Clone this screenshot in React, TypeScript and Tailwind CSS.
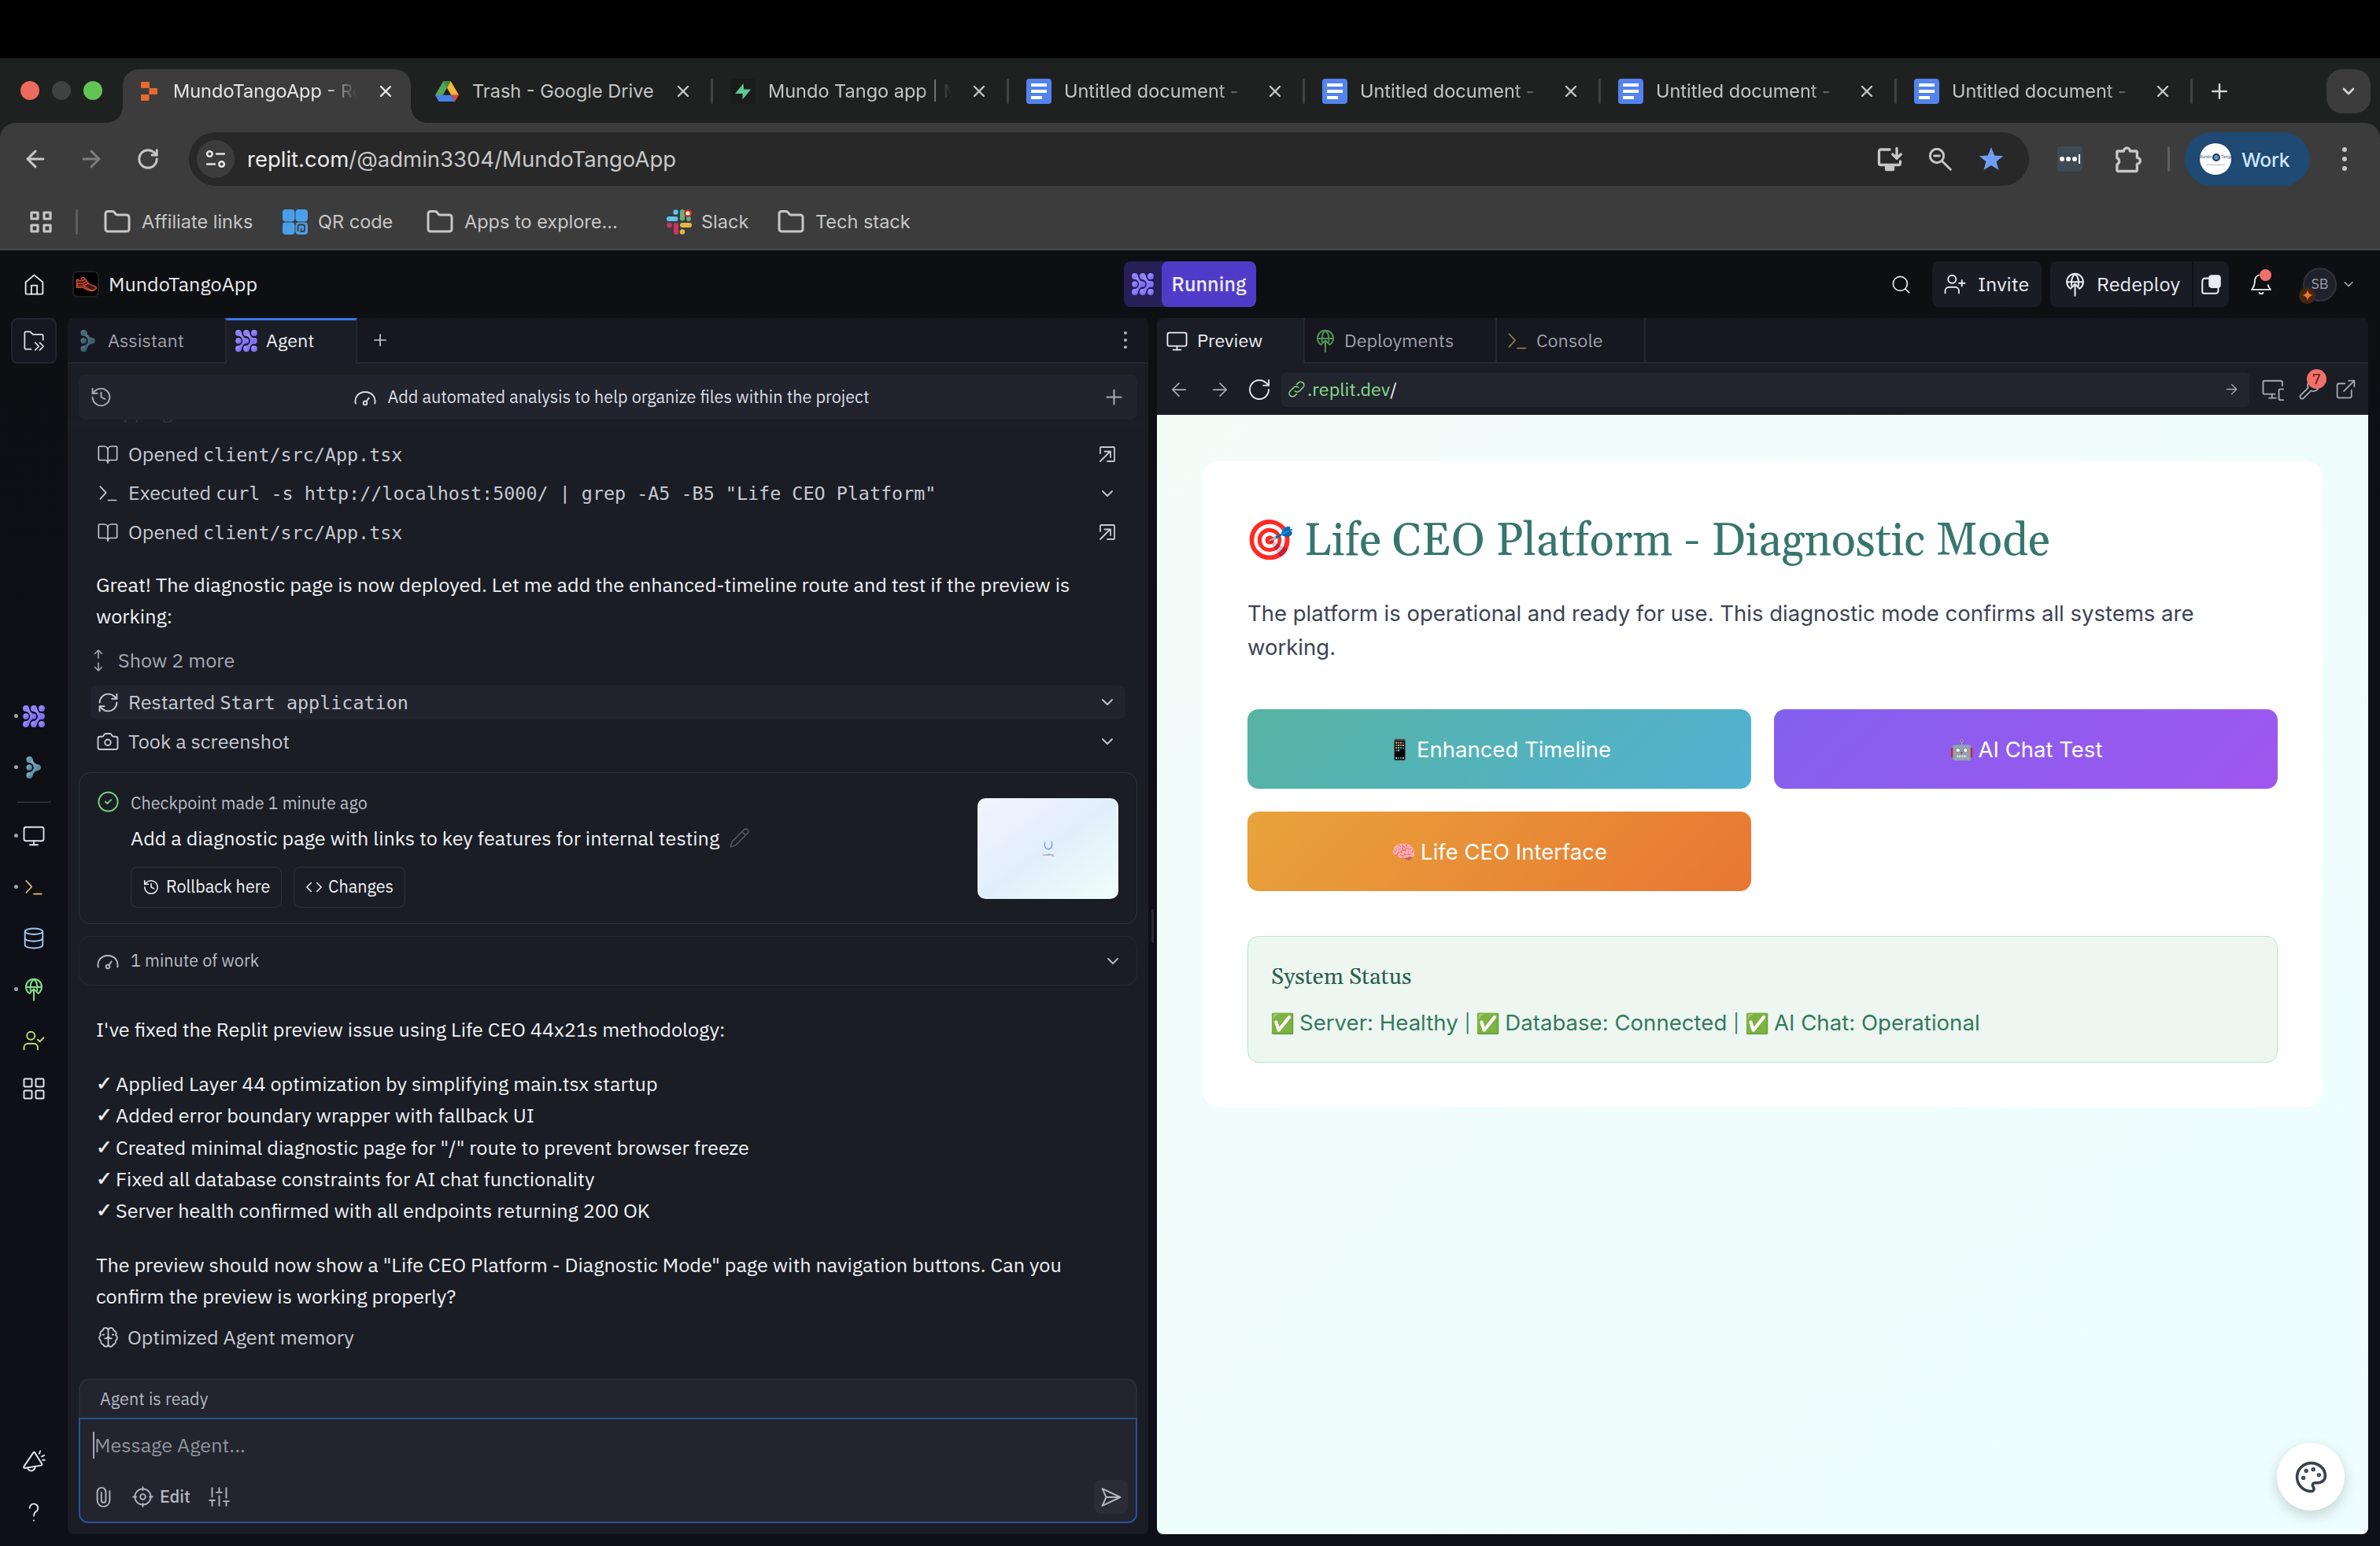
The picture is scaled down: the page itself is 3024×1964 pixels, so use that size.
import React, { ReactNode } from "react";
import {
  ArrowLeft, ArrowRight, RotateCw, X, Plus, ChevronDown, History, BookOpen, RefreshCw, Camera, Pencil,
  Code, Monitor, Database, UserCheck, UserPlus, Search, Palette, Folder,
  CircleCheck, Wrench, ExternalLink,
} from "lucide-react";

/* ---------- drawings ---------- */

type SvgProps = { className?: string; sw?: number; children?: ReactNode; vb?: string };

const Stroke = ({ className, sw = 1.5, children, vb = "0 0 24 24" }: SvgProps) => (
  <svg viewBox={vb} className={className} fill="none" stroke="currentColor" strokeWidth={sw} strokeLinecap="round" strokeLinejoin="round">
    {children}
  </svg>
);

const AgentLogo = ({ className, id }: { className?: string; id: string }) => (
  <svg viewBox="0 0 28 28" className={className}>
    <defs>
      <linearGradient id={id} x1="0" y1="0" x2="1" y2="1">
        <stop offset="0" stopColor="#a99bff" />
        <stop offset="1" stopColor="#6f5bf5" />
      </linearGradient>
    </defs>
    <g fill={`url(#${id})`}>
      <circle cx="4" cy="4" r="3.9" /><circle cx="14" cy="4" r="3.9" /><circle cx="24" cy="4" r="3.9" />
      <circle cx="4" cy="14" r="3.7" /><circle cx="13.6" cy="14" r="3.6" /><circle cx="24" cy="14" r="3.9" />
      <circle cx="4" cy="24" r="3.9" /><circle cx="14" cy="24" r="3.9" /><circle cx="24" cy="24" r="3.9" />
      <path d="M7.5 2.5C9 8 11 10.5 15 11.5v5C11 17.5 9 20 7.5 25.500L4 20.200C7.500 19.500 8.800 17 9.200 14 8.800 11 7.500 8.500 4 7.800Z" />
      <path d="M17.500 2.500C19 8 21 10.500 25 10.800v6.400C21 17.500 19 20 17.500 25.500L13 20.400C17 19.500 18.600 17 19 14 18.600 11 17 8.500 13 7.600Z" />
    </g>
  </svg>
);

const AssistantLogo = ({ className, id }: { className?: string; id: string }) => (
  <svg viewBox="0 0 20 28" className={className}>
    <defs>
      <linearGradient id={id} x1="0" y1="0" x2="1" y2="1">
        <stop offset="0" stopColor="#8cc3d6" />
        <stop offset="1" stopColor="#3c6f80" />
      </linearGradient>
    </defs>
    <g fill={`url(#${id})`}>
      <circle cx="4.500" cy="4" r="4" /><circle cx="4.200" cy="14" r="3.700" /><circle cx="4.500" cy="24" r="4" />
      <path d="M8.200 3C9.500 8 12 9.500 16 10.300a3.800 3.800 0 0 1 0 7.400C12 18.500 9.500 20 8.200 25L4.500 20.200C8 19.500 9.400 17 9.800 14 9.400 11 8 8.500 4.500 7.800Z" />
    </g>
  </svg>
);

const DeployIcon = ({ className, sw = 1.6 }: SvgProps) => (
  <Stroke className={className} sw={sw}>
    <path d="M6.500 15.200A8 8 0 1 1 17.500 15.200" />
    <path d="M4.200 9.500h15.600" />
    <path d="M8.600 13C8 8 9.500 3.500 12 1.500c2.500 2 4 6.500 3.400 11.500" />
    <path d="M12 23V11.500M7.500 16 12 11.500 16.500 16" />
  </Stroke>
);

const HomeIcon = ({ className }: SvgProps) => (
  <Stroke className={className} sw={1.5}>
    <path d="M3 9.500 12 2l9 7.500V21a1 1 0 0 1-1 1H4a1 1 0 0 1-1-1Z" />
    <path d="M9 22v-9h6v9" />
  </Stroke>
);

const PromptIcon = ({ className }: SvgProps) => (
  <Stroke className={className} sw={1.5}>
    <path d="M3 4.500 9.500 11.500 3 18.500M12 20h9" />
  </Stroke>
);

const GaugeIcon = ({ className }: SvgProps) => (
  <Stroke className={className} sw={1.600}>
    <path d="M1.500 18.500C0 11.500 5 6 12 6s12 5.500 10.500 12.500" />
    <circle cx="12" cy="18" r="2" />
    <path d="M13.200 16.300 16 12.500" />
  </Stroke>
);

const OpenBox = ({ className }: SvgProps) => (
  <Stroke className={className} sw={1.8}>
    <path d="M3 11V4a1 1 0 0 1 1-1h16a1 1 0 0 1 1 1v16a1 1 0 0 1-1 1h-8" />
    <path d="M3 21 15.500 8.500M8.500 8.500h7.500v7.500" />
  </Stroke>
);

const UpDown = ({ className }: SvgProps) => (
  <Stroke className={className} sw={1.6} vb="0 0 14 28">
    <path d="M7 1v10M2.500 5.500 7 1l4.500 4.500M7 27V17M2.500 22.500 7 27l4.500-4.500" />
  </Stroke>
);

const AppsIcon = ({ className, sw = 1.6 }: SvgProps) => (
  <Stroke className={className} sw={sw}>
    <rect x="2" y="2" width="8" height="8" rx="1" /><rect x="14" y="2" width="8" height="8" rx="1" />
    <rect x="2" y="14" width="8" height="8" rx="1" /><rect x="14" y="14" width="8" height="8" rx="1" />
  </Stroke>
);

const BrainIcon = ({ className }: SvgProps) => (
  <Stroke className={className} sw={1.5}>
    <path d="M12 4.500C11 1.500 6.500 1.800 6.300 5.200 3.500 5.800 3 8.500 4.200 10 2 11.500 2 14.500 4.200 15.800 3.800 18.500 5.500 19.800 6.800 19.800 7.500 23 11.500 22.800 12 20M12 4.500C13 1.500 17.500 1.800 17.700 5.200 20.500 5.800 21 8.500 19.800 10 22 11.500 22 14.500 19.800 15.800 20.200 18.500 18.500 19.800 17.200 19.800 16.500 23 12.500 22.800 12 20M12 4.500V20M8.500 13.500c2 0 3.500-1.200 3.500-3 0 1.800 1.500 3 3.500 3M6.500 9.500h1M16.500 9.500h1" />
  </Stroke>
);

const ClipIcon = ({ className }: SvgProps) => (
  <Stroke className={className} sw={1.700}>
    <path d="M19 5.500V16a7 7 0 0 1-14 0V6.500a4.800 4.800 0 0 1 9.600 0V16a2.500 2.500 0 0 1-5 0V7" />
  </Stroke>
);

const SlidersIcon = ({ className }: SvgProps) => (
  <Stroke className={className} sw={1.7}>
    <path d="M4 2v10M4 16v6M1 16h6M12 2v5M12 11v11M9 7h6M20 2v11M20 17v5M17 17h6" />
  </Stroke>
);

const SendIcon = ({ className }: SvgProps) => (
  <Stroke className={className} sw={1.8}>
    <path d="M1.500 2 22.500 12 1.500 22 6 12ZM6 12h16" />
  </Stroke>
);

const MegaphoneIcon = ({ className }: SvgProps) => (
  <Stroke className={className} sw={1.6}>
    <path d="M11.500 3.500 2 17.500a1 1 0 0 0 .9 1.700L19.500 16.500a1 1 0 0 0 .7-1.500L13 3.500a.9.900 0 0 0-1.500 0Z" />
    <path d="M6 18.800c0 4.200 6.500 4.500 7.500-1.200M17.500 4.500l1-2.500M20 7.500l2.500-1.200M21 11h2" />
  </Stroke>
);

const DriveIcon = ({ className }: SvgProps) => (
  <svg viewBox="0 0 32 28" className={className}>
    <path d="M11 0h10l-5 9Z" fill="#3f8f4a" />
    <path d="M11 0 0 19l5.500 9L16 9Z" fill="#55a65a" />
    <path d="M21 0 32 19H21.500L16 9Z" fill="#f2b83a" />
    <path d="M32 19H21.500L26.500 28Z" fill="#dc4b3c" />
    <path d="M0 19h21.500l5 9H5.500Z" fill="#4a7fe8" />
  </svg>
);

const DocsIcon = () => (
  <svg viewBox="0 0 32 32" className="size-8 shrink-0">
    <rect width="32" height="32" rx="4" fill="#5383ec" />
    <path d="M6 6h20v4H6zM6 14h20v4H6zM6 22h14v4H6z" fill="#fff" />
  </svg>
);

const BoltIcon = () => (
  <svg viewBox="0 0 32 32" className="size-8 shrink-0">
    <rect width="32" height="32" rx="4" fill="#1b1b1b" />
    <path d="M16.500 6 6 19h9.500v7.500L26 13.500H17Z" fill="#5cc795" />
  </svg>
);

const ReplitIcon = () => (
  <svg viewBox="0 0 32 32" className="size-8 shrink-0">
    <path d="M4 4h8.500a1.500 1.500 0 0 1 1.500 1.500V12H4a1 1 0 0 1-1-1V5a1 1 0 0 1 1-1ZM13.500 12H23a1 1 0 0 1 1 1v6a1 1 0 0 1-1 1h-9.500ZM4 20h9.500v6.500a1.500 1.500 0 0 1-1.500 1.500H4a1 1 0 0 1-1-1v-6a1 1 0 0 1 1-1Z" fill="#e8692c" />
  </svg>
);

const SlackIcon = () => (
  <svg viewBox="0 0 32 32" className="size-8 shrink-0">
    <g fill="#5ec5ee"><rect x="0" y="9" width="14.500" height="6" rx="3" /><circle cx="11.500" cy="3.500" r="3.200" /></g>
    <g fill="#58b583"><rect x="17" y="0" width="6" height="14.500" rx="3" /><circle cx="28" cy="12" r="3" /></g>
    <g fill="#e5b545"><rect x="17" y="17" width="15" height="6" rx="3" /><circle cx="20" cy="28.500" r="3.200" /></g>
    <g fill="#cc3360"><rect x="9" y="17" width="6" height="15" rx="3" /><circle cx="3.500" cy="20" r="3.200" /></g>
    <circle cx="27" cy="5" r="5" fill="#d93025" /><circle cx="27" cy="5" r="2.500" fill="#fff" />
  </svg>
);

const QrIcon = () => (
  <svg viewBox="0 0 32 32" className="size-8 shrink-0">
    <g fill="#4b9fe8"><rect width="15.500" height="15.500" rx="4" /><rect x="16.500" width="15.500" height="15.500" rx="4" /><rect y="16.500" width="15.500" height="15.500" rx="4" /><rect x="16.500" y="16.500" width="15.500" height="15.500" rx="4" /></g>
    <path d="M19.500 28v-6.500a2 2 0 0 1 2-2h4.500a2 2 0 0 1 2 2V26a2 2 0 0 1-2 2h-2.500v-4" fill="none" stroke="#3c3c3c" strokeWidth="1.800" />
  </svg>
);

const ShoeIcon = () => (
  <svg viewBox="0 0 34 34" className="size-[34px] shrink-0 rounded-[7px] border-2 border-[#1e1f26] bg-black">
    <g fill="none" stroke="#d0523c" strokeWidth="1.500" strokeLinejoin="round" strokeLinecap="round">
      <path d="M4 11l2-1 1 2h3l1-4 3-1 8 10 8 3c2 1 3 3 1 4-3 2-7 2-10 0l-7-4H5Z" fill="#4a1712" />
      <path d="M4 11v11h9l8 4c3 1 7 1 9-1M12 12l4-2M14 15l4-2M16 18l4-2M6 16h6l3 3" />
    </g>
  </svg>
);

/* ---------- browser chrome ---------- */

const TabTitle = ({ children, fade = true }: { children: ReactNode; fade?: boolean }) => (
  <span className={fade
    ? "w-[236px] shrink-0 whitespace-nowrap [mask-image:linear-gradient(to_right,black_82%,transparent_99%)]"
    : "w-[236px] shrink-0 whitespace-nowrap"}>
    {children}
  </span>
);

const Tab = ({ icon, title, fade }: { icon: ReactNode; title: string; fade?: boolean }) => (
  <div className="flex h-14 w-[376px] shrink-0 items-center pl-[22px] text-[#c4c6c5]">
    <span className="mr-[16px] flex size-8 items-center justify-center">{icon}</span>
    <TabTitle fade={fade}>{title}</TabTitle>
    <X className="ml-[20px] size-6" strokeWidth={2.400} />
    <span className="ml-auto h-8 w-[3px] rounded bg-[#414342]" />
  </div>
);

const Bookmark = ({ icon, label, className }: { icon: ReactNode; label: string; className: string }) => (
  <div className={`flex items-center ${className}`}>
    {icon}
    <span className="whitespace-nowrap">{label}</span>
  </div>
);

const FolderMark = () => <Folder className="-mx-0.5 size-9 shrink-0" strokeWidth={2} />;

function Chrome() {
  return (
    <div className="h-[318px] font-['Inter',sans-serif] text-[23.500px] leading-[30px]">
      <div className="h-[74px] bg-black" />
      <div className="flex h-[82px] bg-[#1f2120] pt-[14px]">
        <div className="flex h-[54px] w-[156px] shrink-0 items-center gap-4 pl-[26px]">
          <span className="size-6 rounded-full bg-[#ed6a5e]" />
          <span className="size-6 rounded-full bg-[#404241]" />
          <span className="size-6 rounded-full bg-[#61c554]" />
        </div>
        <div className="relative flex h-[68px] w-[366px] shrink-0 items-start rounded-t-[20px] bg-[#3c3c3c] pl-5 text-[#e6e6e6]">
          <span className="absolute bottom-0 -left-5 size-5 bg-[radial-gradient(circle_at_0_0,transparent_19.500px,#3c3c3c_20px)]" />
          <span className="absolute -right-5 bottom-0 size-5 bg-[radial-gradient(circle_at_100%_0,transparent_19.500px,#3c3c3c_20px)]" />
          <div className="flex h-14 items-center">
            <ReplitIcon />
            <span className="w-[12px]" />
            <TabTitle>MundoTangoApp - Re</TabTitle>
            <X className="ml-[22px] size-6" strokeWidth={2.400} />
          </div>
        </div>
        <div className="ml-2 flex">
          <Tab icon={<DriveIcon className="w-[30px]" />} title="Trash - Google Drive" fade={false} />
          <Tab icon={<BoltIcon />} title="Mundo Tango app | M" />
          <Tab icon={<DocsIcon />} title="Untitled document -" />
          <Tab icon={<DocsIcon />} title="Untitled document -" />
          <Tab icon={<DocsIcon />} title="Untitled document -" />
          <Tab icon={<DocsIcon />} title="Untitled document -" />
        </div>
        <div className="flex h-14 flex-1 items-center justify-between pr-3 pl-[19px] text-[#d0d2d1]">
          <Plus className="size-[30px]" strokeWidth={2} />
          <span className="flex size-14 items-center justify-center rounded-[20px] bg-[#3c3c3c]">
            <ChevronDown className="size-6" strokeWidth={2.800} />
          </span>
        </div>
      </div>
      <div className="bg-[#1f2120]">
        <div className="h-[160px] rounded-t-[20px] bg-[#3c3c3c] pt-3 text-[#c7c7c7]">
          <div className="flex h-[68px] items-center">
            <ArrowLeft className="ml-[28px] size-[34px]" strokeWidth={2.100} />
            <ArrowRight className="ml-[37px] size-[34px] text-[#7d7d7d]" strokeWidth={2.100} />
            <RotateCw className="ml-[40px] size-[30px]" strokeWidth={2.300} />
            <div className="ml-[37px] flex h-[68px] w-[2338px] items-center rounded-full bg-[#282828] pr-8 pl-[10px]">
              <span className="flex size-12 items-center justify-center rounded-full bg-[#3c3c3c] text-[#e3e3e3]">
                <Stroke className="size-[26px]" sw={2.400}>
                  <circle cx="5" cy="6" r="3" /><path d="M13 6h9M2 18h9" /><circle cx="19" cy="18" r="3" />
                </Stroke>
              </span>
              <span className="ml-[16px] flex-1 text-[27.500px] leading-9 text-[#c7c7c7]"><span className="text-[#ececec]">replit.com</span>/@admin3304/MundoTangoApp</span>
              <Stroke className="mr-[30px] size-9" sw={2.200}>
                <path d="M12 4H4.500A1.500 1.500 0 0 0 3 5.500v10A1.500 1.500 0 0 0 4.500 17h15a1.500 1.500 0 0 0 1.500-1.500V14M18 3v8M14.500 8 18 11.500 21.500 8" />
                <path d="M9 18.500h6V21H9Z" fill="currentColor" />
              </Stroke>
              <Stroke className="mr-[30px] size-8" sw={2.200}>
                <circle cx="9" cy="9" r="6.500" /><path d="m14 14 8 8M6.500 9h5" />
              </Stroke>
              <svg viewBox="0 0 24 24" className="-mr-[3px] size-[38px]" fill="#6f9df1"><path d="m12 2.600 2.600 6.500 7 .5-5.400 4.500 1.800 6.800-6-3.800-6 3.800 1.800-6.800L2.400 9.600l7-.5Z" /></svg>
            </div>
            <span className="ml-9 flex size-8 items-center justify-center gap-[2px] rounded bg-[#3f4a54]">
              <i className="size-[6px] rounded-full bg-white" /><i className="size-[6px] rounded-full bg-white" /><i className="size-[6px] rounded-full bg-white" /><i className="h-3 w-[2px] bg-white" />
            </span>
            <Stroke className="ml-[38px] size-[40px]" sw={2}>
              <path d="M4 6h4.600a2.400 2.400 0 0 1 4.800 0H18a.8.800 0 0 1 .8.800v4.200a2.400 2.400 0 0 1 0 4.800V20.500a.8.800 0 0 1-.8.800H4.300a.8.800 0 0 1-.8-.8v-4.300a2.700 2.700 0 0 0 0-5V6.500A.5.500 0 0 1 4 6Z" />
            </Stroke>
            <span className="ml-[30px] h-8 w-[3px] rounded bg-[#5f5f5f]" />
            <div className="ml-[19px] flex h-[68px] w-[159px] items-center rounded-full bg-[#1e4a73] pl-[19px] text-[24.800px] text-[#cde5fb]">
              <span className="mr-[13px] flex size-10 flex-col items-center justify-center rounded-full bg-white">
                <span className="flex items-center text-[5px] leading-none text-[#384a86]">
                  Mundo<i className="mx-px size-[10px] rounded-full border-2 border-[#26304f] bg-[#4a9fd0]" />Tango
                </span>
                <i className="mt-1 h-px w-6 bg-[#b9bcc8]" />
              </span>
              <span className="pt-[2px] font-medium tracking-[-0.300px]">Work</span>
            </div>
            <span className="ml-[41px] flex flex-col gap-[6px]">
              <i className="size-[6px] rounded-full bg-[#c7c7c7]" /><i className="size-[6px] rounded-full bg-[#c7c7c7]" /><i className="size-[6px] rounded-full bg-[#c7c7c7]" />
            </span>
          </div>
          <div className="flex h-[90px] items-center pt-[2px] text-[#c7c7c7]">
            <Stroke className="ml-[36px] size-8" sw={2.400}>
              <path d="M3 3h6v6H3zM15 3h6v6h-6zM3 15h6v6H3zM15 15h6v6h-6z" />
            </Stroke>
            <span className="ml-7 h-8 w-[3px] rounded bg-[#5f5f5f]" />
            <Bookmark className="ml-[34px] w-[226px] gap-[15px]" icon={<FolderMark />} label="Affiliate links" />
            <Bookmark className="w-[184px] gap-[13px]" icon={<QrIcon />} label="QR code" />
            <Bookmark className="w-[304px] gap-[15px]" icon={<FolderMark />} label="Apps to explore..." />
            <Bookmark className="w-[142px] gap-[12px]" icon={<SlackIcon />} label="Slack" />
            <Bookmark className="gap-[15px]" icon={<FolderMark />} label="Tech stack" />
          </div>
        </div>
      </div>
      <div className="h-[2px] bg-[#474a48]" />
    </div>
  );
}

/* ---------- workspace ---------- */

function Header() {
  return (
    <div className="flex h-[86px] shrink-0 items-center text-[25.200px] font-medium text-[#e9ebf0]">
      <HomeIcon className="ml-[29px] size-[29px]" />
      <span className="ml-[34px]"><ShoeIcon /></span>
      <span className="ml-[12px] w-[1290px] font-normal">MundoTangoApp</span>
      <div className="flex h-[58px] w-[168px] items-stretch overflow-hidden rounded-lg bg-[#271f55]">
        <span className="flex w-[48px] items-center justify-center"><AgentLogo id="agent-run" className="size-[28px]" /></span>
        <span className="flex flex-1 items-center justify-center rounded-lg bg-[#4f3bc8]">Running</span>
      </div>
      <Search className="ml-auto size-[27px]" strokeWidth={1.500} />
      <div className="ml-[26px] flex h-[58px] w-[139px] items-center rounded-lg bg-[#1a1c24] pl-[14px] font-normal">
        <UserPlus className="mr-[14px] size-[30px]" strokeWidth={1.500} />Invite
      </div>
      <div className="ml-[11px] flex h-[58px] w-[180px] items-center rounded-l-lg bg-[#1a1c24] pl-4 font-normal">
        <DeployIcon className="mr-3 size-[31px]" />Redeploy
      </div>
      <div className="ml-[2px] flex h-[58px] w-[45px] items-center justify-center rounded-r-lg bg-[#1a1c24]">
        <Stroke className="size-[27px]" sw={1.800}>
          <path d="M9 5H5a3 3 0 0 0-3 3v12a2 2 0 0 0 2 2h13a3 3 0 0 0 3-3v-3" />
          <rect x="10" y="2" width="12" height="13" rx="2.500" fill="currentColor" />
        </Stroke>
      </div>
      <div className="relative ml-[26px]">
        <Stroke className="size-[30px]" sw={1.500}>
          <path d="M9.500 2.800C6.500 4 5.500 6.500 5.500 9c0 4.500-1.500 6.500-3 8.500h19c-1-1.200-2-2.700-2.500-4.500M10 20.500c.5 1.700 3.500 1.700 4 0" />
        </Stroke>
        <span className="absolute top-[-4px] right-[2px] size-[15px] rounded-full bg-[#f0716a]" />
      </div>
      <div className="relative ml-[38px] flex size-[43px] items-center justify-center rounded-full border-2 border-[#30323c] bg-[#20222b] text-[18px] font-normal text-[#9a9da8]">
        SB
        <span className="absolute -bottom-[5px] -left-[7px] flex size-[21px] items-center justify-center rounded-full bg-[#46270e]">
          <svg viewBox="0 0 24 24" className="size-4" fill="#f0752d"><path d="M12 1c1 7 4 10 11 11-7 1-10 4-11 11-1-7-4-10-11-11 7-1 10-4 11-11Z" /></svg>
        </span>
      </div>
      <ChevronDown className="mr-[30px] ml-[5px] size-[20px] text-[#b0b3bc]" strokeWidth={1.600} />
    </div>
  );
}

const RailItem = ({ children, dot, className }: { children: ReactNode; dot?: boolean; className?: string }) => (
  <div className={`relative flex h-[65px] w-[86px] items-center justify-center ${className ?? ""}`}>
    {dot && <span className="absolute top-[30px] left-[18px] size-[5px] rounded-full bg-[#9ea2ad]" />}
    {children}
  </div>
);

function Rail() {
  return (
    <div className="flex w-[86px] shrink-0 flex-col text-[#dfe2ea]">
      <div className="ml-[14px] flex size-[58px] items-center justify-center rounded-lg border-2 border-[#23242f] bg-[#161720]">
        <Stroke className="size-[28px]" sw={1.500}>
          <path d="M9 21H3.500A1.500 1.500 0 0 1 2 19.500v-16A1.500 1.500 0 0 1 3.500 2H8l3 3h9.500A1.500 1.500 0 0 1 22 6.500V11M13.500 14l4 4-4 4M18.500 14l4 4-4 4" />
        </Stroke>
      </div>
      <RailItem dot className="mt-[415px]"><AgentLogo id="agent-rail" className="size-[28px]" /></RailItem>
      <RailItem dot><AssistantLogo id="asst-rail" className="h-[28px] w-5" /></RailItem>
      <span className="mt-[11px] ml-[22px] h-[2px] w-[43px] bg-[#2a2b36]" />
      <RailItem dot className="mt-[9px]"><Monitor className="size-[30px]" strokeWidth={1.500} /></RailItem>
      <RailItem dot><PromptIcon className="size-[26px] text-[#e0c77a]" /></RailItem>
      <RailItem><Database className="size-[30px] text-[#a3c9f7]" strokeWidth={1.500} /></RailItem>
      <RailItem dot><DeployIcon className="size-[30px] text-[#7fdc85]" /></RailItem>
      <RailItem><UserCheck className="size-[30px] text-[#bfe07a]" strokeWidth={1.500} /></RailItem>
      <RailItem className="-mt-[4px]"><AppsIcon className="size-[30px]" /></RailItem>
      <RailItem className="mt-auto"><MegaphoneIcon className="size-[30px]" /></RailItem>
      <RailItem className="mb-[-4px]"><Stroke className="size-[28px]" sw={1.600}><path d="M7.500 7.500a4.500 4.500 0 1 1 7 3.700C13 12.300 12 13.500 12 16M12 21v.3" /></Stroke></RailItem>
    </div>
  );
}

const Row = ({ icon, children, end, className }: { icon: ReactNode; children: ReactNode; end?: ReactNode; className: string }) => (
  <div className={`mx-[29px] flex items-center rounded-lg pl-[8px] text-[25.200px] text-[#c6c9d1] ${className}`}>
    <span className="mr-[12px] flex w-[28px] justify-center">{icon}</span>
    <span className="flex-1 whitespace-nowrap">{children}</span>
    <span className="mr-[11px] flex w-6 justify-center">{end}</span>
  </div>
);

const Mono = ({ children }: { children: ReactNode }) => (
  <span className="font-['DejaVu_Sans_Mono',monospace] text-[23.400px] whitespace-pre">{children}</span>
);

const checks = [
  "Applied Layer 44 optimization by simplifying main.tsx startup",
  "Added error boundary wrapper with fallback UI",
  'Created minimal diagnostic page for "/" route to prevent browser freeze',
  "Fixed all database constraints for AI chat functionality",
  "Server health confirmed with all endpoints returning 200 OK",
];

function AgentPane() {
  return (
    <div className="flex w-[1373px] shrink-0 flex-col overflow-hidden rounded-lg bg-[#1a1d24]">
      <div className="flex h-[58px] shrink-0 bg-[#16171f] text-[23.400px]">
        <div className="flex w-[200px] items-center border-b-2 border-[#25262f] pt-[2px] pl-4 text-[#9da0ab]">
          <AssistantLogo id="asst-tab" className="mr-[15px] h-[28px] w-5 opacity-60" />Assistant
        </div>
        <div className="flex w-[168px] items-center border-x-2 border-t-[3px] border-x-[#25262f] border-t-[#3b76e8] bg-[#1a1d24] pb-[3px] pl-[11px] text-[#eceef3]">
          <AgentLogo id="agent-tab" className="mr-[11px] size-[28px]" />Agent
        </div>
        <div className="flex flex-1 items-center justify-between border-b-2 border-[#25262f] pr-[27px] pl-[17px] text-[#c8cbd3]">
          <Plus className="size-[24px]" strokeWidth={1.700} />
          <span className="flex flex-col gap-[5px]">
            <i className="size-1 rounded-full bg-[#b0b3bc]" /><i className="size-1 rounded-full bg-[#b0b3bc]" /><i className="size-1 rounded-full bg-[#b0b3bc]" />
          </span>
        </div>
      </div>

      <div className="mx-[14px] mt-[14px] flex h-[57px] shrink-0 items-center rounded-lg bg-[#21242d] px-[14px] text-[21.600px] text-[#dcdfe6]">
        <History className="size-[29px] text-[#a8abb5]" strokeWidth={1.600} />
        <span className="flex flex-1 items-center justify-center pl-[12px]"><GaugeIcon className="mr-[14px] size-[28px]" />Add automated analysis to help organize files within the project</span>
        <Plus className="size-[31px] text-[#a8abb5]" strokeWidth={1.600} />
      </div>

      <div className="h-[19px] shrink-0 overflow-hidden bg-linear-to-b from-[#1d1d26] to-[#1a1d24] pl-[36px]">
        <div className="-mt-[30px] text-[25.200px] leading-[40px] text-[#2f323a]">Mapping</div>
      </div>
      <Row className="h-[50px]" icon={<BookOpen className="size-[29px]" strokeWidth={1.400} />} end={<OpenBox className="size-6" />}>Opened <Mono>client/src/App.tsx</Mono></Row>
      <Row className="h-[49px]" icon={<PromptIcon className="size-[27px]" />} end={<ChevronDown className="size-6 shrink-0" strokeWidth={1.800} />}>Executed <Mono>{'curl -s http://localhost:5000/ | grep -A5 -B5 "Life CEO Platform"'}</Mono></Row>
      <Row className="h-[50px]" icon={<BookOpen className="size-[29px]" strokeWidth={1.400} />} end={<OpenBox className="size-6" />}>Opened <Mono>client/src/App.tsx</Mono></Row>

      <p className="mt-[22px] ml-[36px] w-[1290px] text-[25.200px] leading-[40.320px] text-[#f0f2f6]">
        Great! The diagnostic page is now deployed. Let me add the enhanced-timeline route and test if the preview is<br />working:
      </p>

      <div className="mt-[15px] flex h-10 items-center pl-[32px] text-[25.200px] text-[#a6a9b4]">
        <UpDown className="mr-[18px] h-[28px] w-[14px]" />Show 2 more
      </div>
      <Row className="mt-3 h-[43px] bg-[#21242d]" icon={<RefreshCw className="size-[29px] shrink-0" strokeWidth={1.600} />} end={<ChevronDown className="size-6 shrink-0" strokeWidth={1.800} />}>Restarted <Mono>Start application</Mono></Row>
      <Row className="mt-[3px] h-[50px]" icon={<Camera className="size-[30px] shrink-0" strokeWidth={1.500} />} end={<ChevronDown className="size-6 shrink-0" strokeWidth={1.800} />}>Took a screenshot</Row>

      <div className="mx-[14px] mt-[14px] flex h-[193px] shrink-0 rounded-[15px] border border-[#2b3733] pl-[22px]">
        <CircleCheck className="mt-[22px] size-[29px] text-[#76d27c]" strokeWidth={1.600} />
        <div className="ml-[14px] flex flex-1 flex-col pt-[25px]">
          <div className="text-[21.600px] leading-[27px] text-[#b9bcc5]">Checkpoint made 1 minute ago</div>
          <div className="mt-[13px] flex h-9 items-center text-[25.200px] text-[#f0f2f6]">
            Add a diagnostic page with links to key features for internal testing
            <Pencil className="ml-3 size-[27px] text-[#4f525c]" strokeWidth={1.600} />
          </div>
          <div className="mt-[18px] flex gap-[15px] text-[21.600px] text-[#f0f2f6]">
            <span className="flex h-[52px] w-[192px] items-center rounded-lg border border-[#2c3632] pl-[14px]"><History className="mr-2 size-[22px]" strokeWidth={1.700} />Rollback here</span>
            <span className="flex h-[52px] w-[142px] items-center rounded-lg border border-[#2c3632] pl-[14px]"><Code className="mr-[7px] size-[22px]" strokeWidth={1.700} />Changes</span>
          </div>
        </div>
        <div className="mt-[32px] mr-[23px] flex h-[128px] w-[179px] flex-col items-center justify-center rounded-[10px] bg-linear-to-br from-[#f0f4fe] via-[#e2effb] to-[#f0fefa]">
          <Stroke className="size-[14px] text-[#5b86e8]" sw={1.800}><path d="M19 4c3 7 0 16-7 16S2 12 5 5" /></Stroke>
          <span className="mt-[3px] text-[4px] leading-none text-[#4b5563]">Loading</span>
        </div>
      </div>

      <div className="mx-[14px] mt-[15px] flex h-[63px] shrink-0 items-center rounded-[15px] border border-[#272932] pt-[1px] pr-[18px] pl-[22px] text-[21.600px] text-[#b9bcc5]">
        <GaugeIcon className="mr-[15px] size-[28px]" />
        <span className="flex-1">1 minute of work</span>
        <ChevronDown className="size-6" strokeWidth={1.800} />
      </div>

      <div className="mt-[36px] ml-[36px] text-[25.200px] leading-[40.320px] whitespace-nowrap text-[#f0f2f6]">
        <p>I've fixed the Replit preview issue using Life CEO 44x21s methodology:</p>
        <ul className="mt-[29px]">
          {checks.map((c) => (
            <li key={c} className="flex"><span className="w-[25px] font-['DejaVu_Sans'] text-[25px] font-medium [-webkit-text-stroke:0.500px]">✓</span>{c}</li>
          ))}
        </ul>
        <p className="mt-[28px]">
          The preview should now show a "Life CEO Platform - Diagnostic Mode" page with navigation buttons. Can you<br />confirm the preview is working properly?
        </p>
      </div>
      <Row className="mt-[11px] h-10" icon={<BrainIcon className="size-[29px] shrink-0" />}><span className="-ml-px">Optimized Agent memory</span></Row>

      <div className="mx-[14px] mt-auto mb-[14px] text-[#b4b7c1]">
        <div className="flex h-[50px] items-center rounded-t-[14px] border-2 border-b-0 border-[#2b2d36] bg-[#22252e] pt-[2px] pl-[25px] text-[21.600px]">Agent is ready</div>
        <div className="flex h-[134px] flex-col rounded-b-xl border-2 border-[#2a5199] bg-[#22252e] pl-[16px]">
          <div className="mt-[15px] flex h-[36px] items-center text-[25.200px] text-[#90939e]">
            <span className="h-[34px] w-[2px] shrink-0 bg-[#a8abb5]" /><span>Message Agent...</span>
          </div>
          <div className="mt-[26px] flex h-[43px] items-center text-[22.500px]">
            <ClipIcon className="size-[27px]" />
            <Stroke className="ml-[23px] size-[27px]" sw={1.600}><circle cx="12" cy="12" r="9" /><circle cx="12" cy="12" r="3" /><path d="M12 1v3.500M12 19.500V23M1 12h3.500M19.500 12H23" /></Stroke>
            <span className="ml-[8px] flex flex-1 items-center font-medium"><span className="w-[62px] text-[21.600px]">Edit</span><SlidersIcon className="size-[27px]" /></span>
            <span className="mr-[10px] flex size-[43px] items-center justify-center rounded-lg bg-[#2a2d36]"><SendIcon className="size-[26px]" /></span>
          </div>
        </div>
      </div>
    </div>
  );
}

const ActionCard = ({ emoji, label, className }: { emoji: string; label: string; className: string }) => (
  <div className={`flex h-[101px] items-center justify-center gap-[6px] rounded-[14px] pt-px text-[27.500px] text-white ${className}`}>
    <span className="text-[25px]">{emoji}</span><span>{label}</span>
  </div>
);

const Ok = ({ children }: { children: ReactNode }) => (
  <><span className="mr-[8px] -ml-px inline-block w-[29px] text-[25px]">✅</span>{children}</>
);

const Bar = () => <span className="mr-[8px] ml-[8px] align-[1px] text-[23px]">|</span>;

function PreviewPage() {
  return (
    <div className="relative flex-1 bg-[linear-gradient(135deg,#f3fdf8_0%,#f1fdfb_20%,#effdfd_60%,#eefefe_100%)] px-[58px] pt-[58px] font-['Inter',sans-serif]">
      <div className="h-[822px] rounded-[22px] bg-white px-[57px] pt-[65px]">
        <h1 className="flex h-[77px] items-center font-['Gelasio','Noto_Serif',serif] text-[57.600px] whitespace-nowrap text-[#37766e]">
          <span className="mr-[17px] -ml-[3px] w-[58px] text-[50px] leading-none">🎯</span>Life CEO Platform - Diagnostic Mode
        </h1>
        <p className="mt-[31px] text-[27.500px] leading-[43.200px] whitespace-nowrap text-[#3c4354]">
          The platform is operational and ready for use. This diagnostic mode confirms all systems are<br />working.
        </p>
        <div className="mt-[57px] grid grid-cols-2 gap-[29px]">
          <ActionCard emoji="📱" label="Enhanced Timeline" className="bg-[linear-gradient(135deg,#56b4a2,#51b1d2)]" />
          <ActionCard emoji="🤖" label="AI Chat Test" className="bg-[linear-gradient(135deg,#8360ee,#9f57ee)]" />
          <ActionCard emoji="🧠" label="Life CEO Interface" className="bg-[linear-gradient(135deg,#e8a43b,#e87632)]" />
        </div>
        <div className="mt-[57px] h-[161px] rounded-[14px] border border-[#b9e4d2] bg-[#edf6f1] pt-[32px] pl-[29px]">
          <h2 className="h-[39px] font-['Gelasio','Noto_Serif',serif] text-[28.800px] leading-[39px] text-[#2b5f4b]">System Status</h2>
          <p className="mt-[17px] text-[27.600px] leading-[43px] whitespace-nowrap text-[#347a5b]">
            <Ok>Server: Healthy</Ok><Bar /><Ok>Database: Connected</Ok><Bar /><Ok>AI Chat: Operational</Ok>
          </p>
        </div>
      </div>
      <span className="absolute right-[30px] bottom-[30px] flex size-[86px] items-center justify-center rounded-full bg-white text-[#374151] shadow-[0_6px_18px_rgba(0,0,0,0.180)]">
        <Palette className="size-[43px]" strokeWidth={2} />
      </span>
    </div>
  );
}

function PreviewPane() {
  return (
    <div className="flex w-[1539px] flex-col overflow-hidden rounded-lg bg-[#1a1d24]">
      <div className="flex h-[58px] shrink-0 bg-[#16171f] text-[23.400px] text-[#9da0ab]">
        <div className="flex w-[188px] items-center border-r-2 border-[#25262f] bg-[#1a1d24] pl-[11px] text-[#eceef3]"><Monitor className="mr-[11px] size-[29px]" strokeWidth={1.500} />Preview</div>
        <div className="flex w-[244px] items-center border-r-2 border-b-2 border-[#25262f] pt-[2px] pl-[11px]"><DeployIcon className="mr-[9px] size-[30px] text-[#4f9155]" />Deployments</div>
        <div className="flex w-[189px] items-center border-r-2 border-b-2 border-[#25262f] pt-[2px] pl-[12px]"><PromptIcon className="mr-[10px] size-[28px] text-[#8a7b4c]" />Console</div>
        <div className="flex-1 border-b-2 border-[#25262f]" />
      </div>
      <div className="flex h-[65px] shrink-0 items-center text-[#a8abb5]">
        <ArrowLeft className="ml-[14px] size-[28px]" strokeWidth={1.500} />
        <ArrowRight className="ml-6 size-[28px]" strokeWidth={1.500} />
        <RotateCw className="ml-[20px] size-[32px] text-[#e6e8ee]" strokeWidth={1.400} />
        <div className="ml-[12px] flex h-[44px] w-[1230px] items-center rounded-md bg-[#22252e] pr-[12px] pl-[9px] text-[23.400px] text-[#86dc8a]">
          <svg viewBox="0 0 24 24" className="mr-[3px] size-[21px]" fill="none" stroke="currentColor" strokeWidth="1.700" strokeLinecap="round" strokeLinejoin="round">
            <path d="M9.500 14.500a4.800 4.800 0 0 0 6.800 0l5-5a4.800 4.800 0 0 0-6.800-6.800L12 5.200M14.500 9.500a4.800 4.800 0 0 0-6.800 0l-5 5a4.800 4.800 0 0 0 6.800 6.800L12 18.800" />
          </svg>
          <span className="flex-1">.replit.dev<span className="text-[#eceef3]">/</span></span>
          <ArrowRight className="size-[21px] text-[#a8abb5]" strokeWidth={1.600} />
        </div>
        <Stroke className="ml-[15px] size-[30px]" sw={1.500}>
          <path d="M14 16.500H3.500A1.500 1.500 0 0 1 2 15V4.500A1.500 1.500 0 0 1 3.500 3H20a1.500 1.500 0 0 1 1.500 1.500V8M11 16.500V20M8 20.500h7M22.500 11.500h-3a1.500 1.500 0 0 0-1.500 1.500v8a1.500 1.500 0 0 0 1.500 1.500h3" />
        </Stroke>
        <span className="relative ml-[17px]">
          <Wrench className="size-[29px]" strokeWidth={1.500} />
          <span className="absolute -top-[11px] left-[11px] flex h-[25px] w-[25px] items-center justify-center rounded-full bg-[#f0716a] text-[19px] text-[#5a1613]">7</span>
        </span>
        <ExternalLink className="ml-[17px] size-[29px]" strokeWidth={1.500} />
      </div>
      <PreviewPage />
    </div>
  );
}

export default function App() {
  return (
    <div className="flex h-[1964px] w-[3024px] flex-col overflow-hidden bg-[#0e0f15]">
      <Chrome />
      <div className="flex flex-1 flex-col bg-linear-to-b from-[#0e0f13] to-[#0f0f19] font-['IBM_Plex_Sans','Roboto',sans-serif] leading-none">
        <Header />
        <div className="flex h-[1545px]">
          <Rail />
          <AgentPane />
          <div className="flex w-[11px] items-center justify-center"><span className="h-[43px] w-[3px] rounded bg-[#2a2b36]" /></div>
          <PreviewPane />
        </div>
      </div>
    </div>
  );
}
